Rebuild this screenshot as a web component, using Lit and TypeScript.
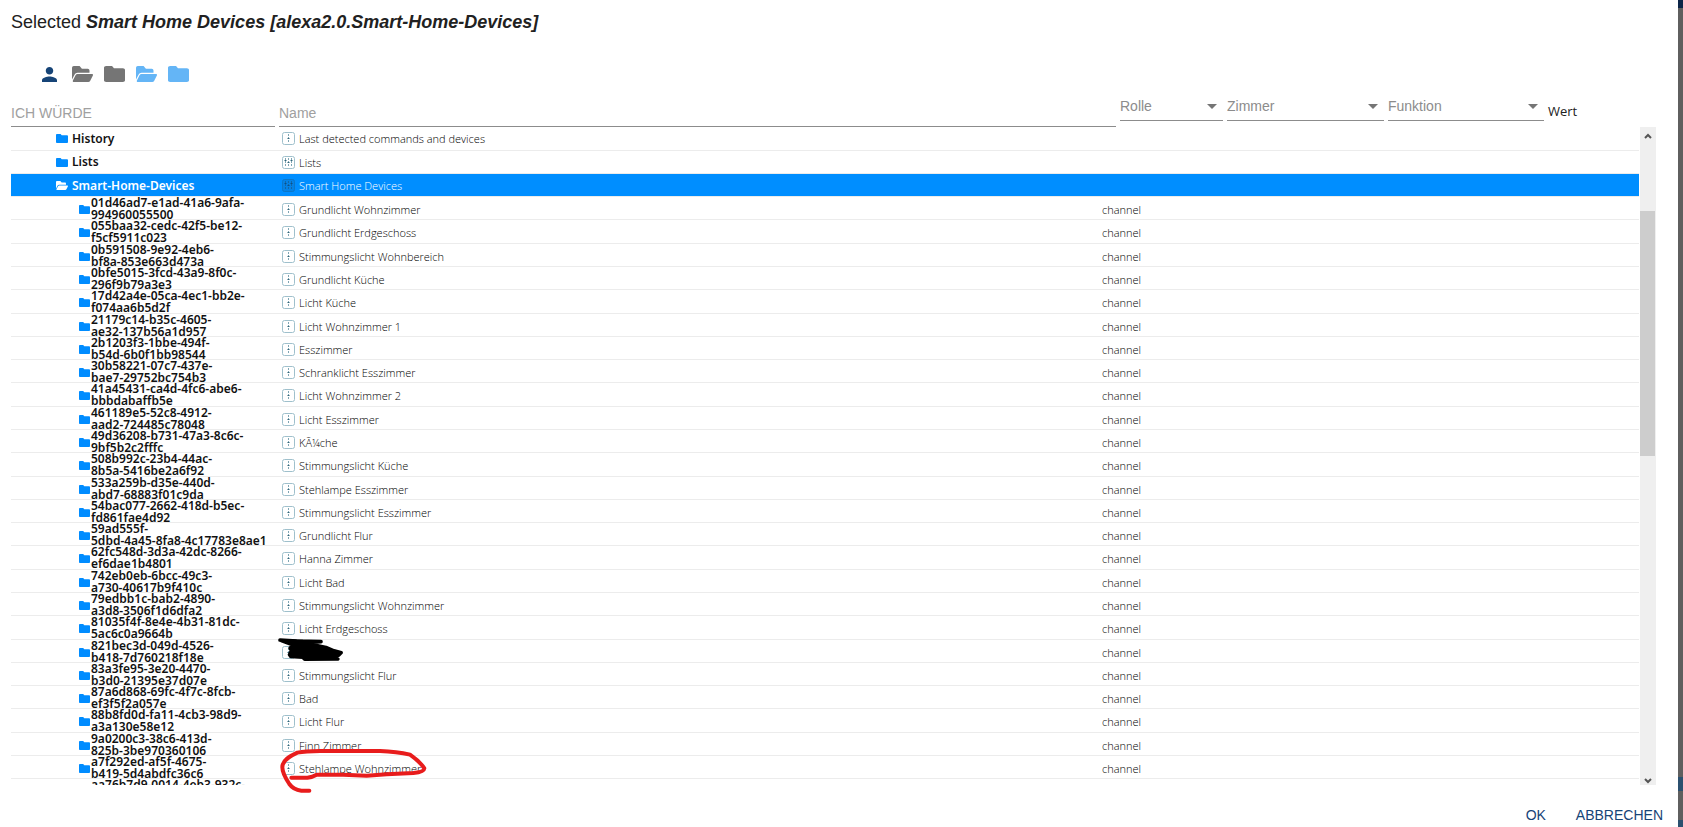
import { LitElement, html, css, svg } from "lit";
import { customElement } from "lit/decorators.js";
import { classMap } from "lit/directives/class-map.js";

type Row = { id: string[]; name: string; kind: "channel" | "device"; role: string; depth: number; selected?: boolean; open?: boolean };

const top = (id: string, name: string, kind: "channel" | "device", selected = false): Row =>
  ({ id: [id], name, kind, role: "", depth: 1, selected, open: selected });

const children: [string, string, string][] = [
  ["01d46ad7-e1ad-41a6-9afa-", "994960055500", "Grundlicht Wohnzimmer"],
  ["055baa32-cedc-42f5-be12-", "f5cf5911c023", "Grundlicht Erdgeschoss"],
  ["0b591508-9e92-4eb6-", "bf8a-853e663d473a", "Stimmungslicht Wohnbereich"],
  ["0bfe5015-3fcd-43a9-8f0c-", "296f9b79a3e3", "Grundlicht Küche"],
  ["17d42a4e-05ca-4ec1-bb2e-", "f074aa6b5d2f", "Licht Küche"],
  ["21179c14-b35c-4605-", "ae32-137b56a1d957", "Licht Wohnzimmer 1"],
  ["2b1203f3-1bbe-494f-", "b54d-6b0f1bb98544", "Esszimmer"],
  ["30b58221-07c7-437e-", "bae7-29752bc754b3", "Schranklicht Esszimmer"],
  ["41a45431-ca4d-4fc6-abe6-", "bbbdabaffb5e", "Licht Wohnzimmer 2"],
  ["461189e5-52c8-4912-", "aad2-724485c78048", "Licht Esszimmer"],
  ["49d36208-b731-47a3-8c6c-", "9bf5b2c2fffc", "KÃ¼che"],
  ["508b992c-23b4-44ac-", "8b5a-5416be2a6f92", "Stimmungslicht Küche"],
  ["533a259b-d35e-440d-", "abd7-68883f01c9da", "Stehlampe Esszimmer"],
  ["54bac077-2662-418d-b5ec-", "fd861fae4d92", "Stimmungslicht Esszimmer"],
  ["59ad555f-", "5dbd-4a45-8fa8-4c17783e8ae1", "Grundlicht Flur"],
  ["62fc548d-3d3a-42dc-8266-", "ef6dae1b4801", "Hanna Zimmer"],
  ["742eb0eb-6bcc-49c3-", "a730-40617b9f410c", "Licht Bad"],
  ["79edbb1c-bab2-4890-", "a3d8-3506f1d6dfa2", "Stimmungslicht Wohnzimmer"],
  ["81035f4f-8e4e-4b31-81dc-", "5ac6c0a9664b", "Licht Erdgeschoss"],
  ["821bec3d-049d-4526-", "b418-7d760218f18e", ""],
  ["83a3fe95-3e20-4470-", "b3d0-21395e37d07e", "Stimmungslicht Flur"],
  ["87a6d868-69fc-4f7c-8fcb-", "ef3f5f2a057e", "Bad"],
  ["88b8fd0d-fa11-4cb3-98d9-", "a3a130e58e12", "Licht Flur"],
  ["9a0200c3-38c6-413d-", "825b-3be970360106", "Finn Zimmer"],
  ["a7f292ed-af5f-4675-", "b419-5d4abdfc36c6", "Stehlampe Wohnzimmer"],
  ["aa76b7d9-0014-4eb3-932c-", "\u00a0", ""],
];

const rows: Row[] = [
  top("History", "Last detected commands and devices", "channel"),
  top("Lists", "Lists", "device"),
  top("Smart-Home-Devices", "Smart Home Devices", "device", true),
  ...children.map(([a, b, name], i): Row => ({ id: [a, b], name, kind: "channel", role: i < children.length - 1 ? "channel" : "", depth: 2 })),
];

const scroll = { start: 12.8, size: 37.2 };

const folder = (cls: string) => html`<svg class=${cls} viewBox="0 0 24 20" preserveAspectRatio="none" aria-hidden="true">
  <path d="M2.4 0H9.2L11.4 2.8H21.6C22.9 2.8 24 3.8 24 5V17.8C24 19 22.9 20 21.6 20H2.4C1.1 20 0 19 0 17.8V2.2C0 1 1.1 0 2.4 0Z"/></svg>`;

const folderOpen = (cls: string) => html`<svg class=${cls} viewBox="0 64 576 384" preserveAspectRatio="none" aria-hidden="true">
  <path d="M572.694 292.093L500.27 416.248A63.997 63.997 0 0 1 444.989 448H45.025c-18.523 0-30.064-20.093-20.731-36.093l72.424-124.155A64 64 0 0 1 152 256h399.964c18.523 0 30.064 20.093 20.73 36.093zM152 224h328v-48c0-26.51-21.49-48-48-48H272l-64-64H48C21.49 64 0 85.49 0 112v278.046l69.077-118.418C86.214 242.25 117.989 224 152 224z"/></svg>`;

const person = html`<svg class="person" viewBox="4 4 16 16" aria-hidden="true">
  <path d="M12 12c2.21 0 4-1.79 4-4s-1.79-4-4-4-4 1.79-4 4 1.79 4 4 4zm0 2c-2.67 0-8 1.34-8 4v2h16v-2c0-2.66-5.33-4-8-4z"/></svg>`;

const kindIcon = (kind: string) => html`<svg class="kind" viewBox="0 0 13 13" aria-hidden="true">
  <rect class="frame" x="0.5" y="0.5" width="12" height="12" rx="2"/>
  ${kind === "device"
    ? svg`<path class="line" d="M3.5 2V11M6.5 2V11M9.5 2V11"/><path class="knob" d="M2.5 4.5H4.5M5.5 6.5H7.5M8.5 4.5H10.5"/>`
    : svg`<path class="line" d="M6.5 2V11"/><path class="knob" d="M5.5 6.5H7.5"/>`}
</svg>`;

@customElement("app-root")
export class AppRoot extends LitElement {
  static styles = css`
    :host {
      display: block;
      height: 100vh;
      box-sizing: border-box;
      padding-right: 5px;
      overflow: hidden;
      font-family: "Liberation Sans", Arial, sans-serif;
      color: #212121;
      background: linear-gradient(#0b2447 0 8px, #5f5f5f 8px calc(100% - 50px), #2b506f calc(100% - 50px) calc(100% - 36px), #5f5f5f calc(100% - 36px) calc(100% - 7px), #2b506f calc(100% - 7px));
    }
    .dialog {
      height: 100%;
      display: flex;
      flex-direction: column;
      background: #fff;
      padding: 0 11px;
      box-sizing: border-box;
    }
    h1 { margin: 0; padding-top: 11px; font-size: 18px; line-height: 22px; font-weight: 400; }
    .tools { display: flex; align-items: center; gap: 11px; height: 20px; margin: 31px 0 0 31px; }
    button { border: 0; padding: 0; margin: 0; background: none; font: inherit; color: inherit; }
    .tool { display: grid; place-items: center start; width: 21px; height: 20px; }
    svg { display: block; fill: currentColor; }
    .tool.navy { color: #164477; width: 19px; }
    .grey { color: #757575; }
    .sky { color: #64b5f6; }
    .person { width: 15px; height: 15px; }
    .big { width: 21px; height: 16px; }
    .filters {
      display: grid;
      grid-template-columns: 264px 1fr 103px 157px 156px 119px;
      column-gap: 4px;
      height: 32px;
      margin-top: 11px;
      font-size: 14px;
    }
    .filters input, .filters select {
      box-sizing: border-box;
      width: 100%;
      min-width: 0;
      border: 0;
      border-bottom: 1px solid #8c8c8c;
      border-radius: 0;
      padding: 0;
      font: inherit;
      background: none;
      color: #8c8c8c;
      outline: 0;
    }
    .filters input { height: 32px; padding-top: 4px; }
    .filters input::placeholder { color: #a0a0a0; opacity: 1; }
    .pick { position: relative; }
    .filters select { appearance: none; height: 26px; display: block; padding-bottom: 3px; }
    .arrow { position: absolute; right: 6px; top: 9px; width: 10px; height: 5px; color: #757575; pointer-events: none; }
    .value { align-self: center; font-family: "Open Sans", sans-serif; font-size: 13px; }
    .body { position: relative; flex: 1; min-height: 0; display: flex; padding-right: 11px; }
    .list { flex: 1; overflow: hidden; }
    table { display: block; font-family: "Open Sans", "Noto Sans", sans-serif; }
    tbody { display: block; }
    tr {
      display: grid;
      grid-template-columns: 268px 1fr 537px;
      align-items: center;
      height: 23px;
      box-sizing: border-box;
      border-bottom: 1px solid #ececec;
    }
    tr:nth-child(7n + 1), tr:nth-child(7n + 5) { height: 24px; }
    td { padding: 0; display: flex; align-items: center; white-space: nowrap; font-size: 11px; line-height: 15px; font-weight: 300; color: #000; }
    .id { font-family: "Noto Sans", sans-serif; font-size: 12px; font-weight: 600; line-height: 12px; gap: 4px; padding-left: 45px; color: #111; }
    .deep .id { gap: 1px; padding-left: 68px; }
    .folder { width: 12px; height: 9px; color: #008cff; }
    .deep .folder { width: 11px; }
    .name { gap: 4px; padding-left: 3px; }
    .kind { width: 13px; height: 13px; fill: none; }
    .frame { stroke: #9fc0cc; }
    .line { stroke: #7fa6b4; stroke-dasharray: 2 1; }
    .knob { stroke: #2e6478; }
    .selected { background: #008eff; padding-top: 1px; }
    .selected td, .selected .folder { color: #fff; }
    .selected .frame { stroke: #0b77c9; fill: #0482e6; }
    .selected .line { stroke: #1268a8; }
    .selected .knob { stroke: #0d4f86; }
    .bar { width: 16px; margin-left: 1px; background: #efefef; display: flex; flex-direction: column; justify-content: space-between; position: relative; color: #555; }
    .bar button { width: 16px; height: 17px; display: grid; place-items: center; }
    .bar .down { height: 8px; }
    .bar svg { width: 8px; height: 6px; fill: none; stroke: currentColor; stroke-width: 2; }
    .thumb { position: absolute; left: 0; width: 15px; background: #cdcdcd; }
    .marks { position: absolute; left: 259px; top: 503px; width: 180px; height: 180px; fill: none; overflow: visible; pointer-events: none; stroke-linecap: round; stroke-linejoin: round; }
    .actions { display: flex; justify-content: flex-end; align-items: center; gap: 30px; height: 42px; padding: 17px 4px 0 0; box-sizing: border-box; font-size: 14px; line-height: 24px; color: #164477; }
  `;

  private pick(label: string) {
    return html`<div class="pick">
      <select aria-label=${label}><option>${label}</option></select>
      <svg class="arrow" viewBox="0 0 10 5" aria-hidden="true"><path d="M0 0H10L5 5Z"/></svg>
    </div>`;
  }

  private row(r: Row) {
    return html`<tr class=${classMap({ selected: !!r.selected, deep: r.depth === 2 })}>
      <td class="id">${r.open ? folderOpen("folder") : folder("folder")}<span>${r.id[0]}${r.id.length > 1 ? html`<br>${r.id[1]}` : ""}</span></td>
      <td class="name">${kindIcon(r.kind)}<span>${r.name}</span></td>
      <td>${r.role}</td>
    </tr>`;
  }

  render() {
    return html`<main class="dialog">
      <h1>Selected <b><i>Smart Home Devices [alexa2.0.Smart-Home-Devices]</i></b></h1>
      <div class="tools">
        <button class="tool navy" aria-label="Expert">${person}</button>
        <button class="tool grey" aria-label="Expand">${folderOpen("big")}</button>
        <button class="tool grey" aria-label="Collapse">${folder("big")}</button>
        <button class="tool sky" aria-label="Expand one">${folderOpen("big")}</button>
        <button class="tool sky" aria-label="Collapse one">${folder("big")}</button>
      </div>
      <div class="filters">
        <input aria-label="ID" placeholder="ICH WÜRDE">
        <input aria-label="Name" placeholder="Name">
        ${this.pick("Rolle")}${this.pick("Zimmer")}${this.pick("Funktion")}
        <span class="value">Wert</span>
      </div>
      <div class="body">
        <div class="list"><table><tbody>${rows.map((r) => this.row(r))}</tbody></table></div>
        <div class="bar">
          <button aria-label="Up"><svg viewBox="0 0 8 6"><path d="M1 5L4 2L7 5"/></svg></button>
          <div class="thumb" style="top:${scroll.start}%;height:${scroll.size}%"></div>
          <button class="down" aria-label="Down"><svg viewBox="0 0 8 6"><path d="M1 1L4 4L7 1"/></svg></button>
        </div>
        <svg class="marks" viewBox="0 0 540 540" aria-hidden="true">
          <path stroke="#000" stroke-width="11" d="M30 30L80 33L153 35L96 39"/>
          <path stroke="#000" fill="#000" stroke-width="10" d="M34 32L98 34L106 46L140 46L168 52L192 62L214 68L206 76L186 79L204 87L104 88L98 82L62 80L58 74L64 62L60 54L72 46Z"/>
          <path stroke="#e81c1c" stroke-width="12" d="M118 482H94Q70 479 58 462C46 444 37 430 37 412C37 390 60 378 82 368Q106 363 150 363H330Q380 365 420 374Q450 395 463 415Q462 426 430 429L350 433L290 437L220 434L140 434Q128 441 112 443H64"/>
        </svg>
      </div>
      <footer class="actions"><button>OK</button><button>ABBRECHEN</button></footer>
    </main>`;
  }
}
